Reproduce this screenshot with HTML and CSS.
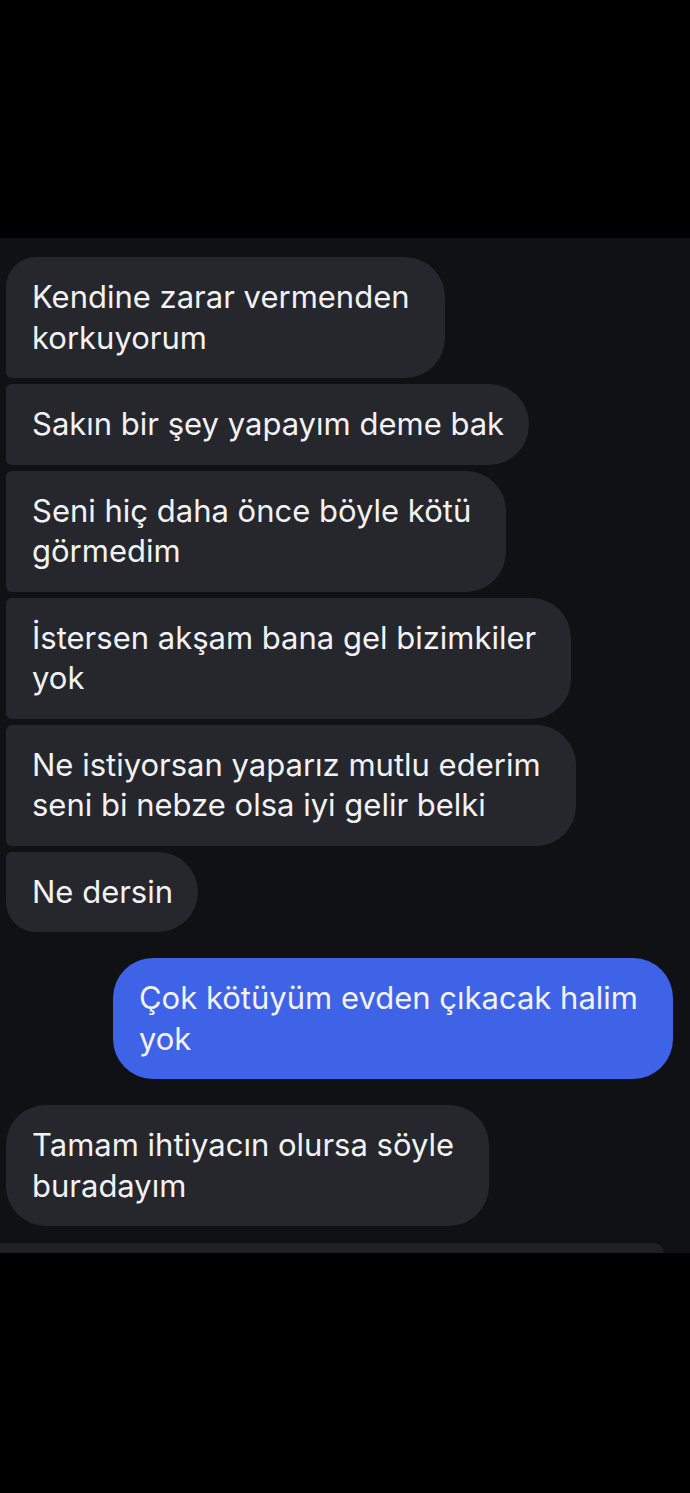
FILE: index.html
```html
<!DOCTYPE html>
<html lang="tr">
<head>
    <meta charset="UTF-8">
    <meta name="viewport" content="width=device-width, initial-scale=1.0">
    <title>Sohbet</title>
    <link rel="stylesheet" href="styles.css">
</head>
<body>

    <div class="top-bar"></div>

    <!-- Mesajlar -->
    <div class="chat">
        <div class="msg in first multi">Kendine zarar vermenden<br>korkuyorum</div>
        <div class="msg in">Sakın bir şey yapayım deme bak</div>
        <div class="msg in multi">Seni hiç daha önce böyle kötü<br>görmedim</div>
        <div class="msg in multi">İstersen akşam bana gel bizimkiler<br>yok</div>
        <div class="msg in multi">Ne istiyorsan yaparız mutlu ederim<br>seni bi nebze olsa iyi gelir belki</div>
        <div class="msg in last">Ne dersin</div>

        <div class="msg out multi">Çok kötüyüm evden çıkacak halim<br>yok</div>

        <div class="msg in single multi">Tamam ihtiyacın olursa söyle<br>buradayım</div>

        <div class="msg peek"></div>
    </div>

</body>
</html>
```

FILE: styles.css
```css
body {
    font-family: Inter, "Noto Sans", sans-serif;
    background-color: #000;
    margin: 0;
    padding: 0;
}

.top-bar {
    height: 238px;
    background-color: #000;
}

.chat {
    height: 1015px;
    overflow: hidden;
    background-color: #0f1115;
    padding: 19px 6px 0 6px;
    box-sizing: border-box;
    display: flex;
    flex-direction: column;
    gap: 6px;
}

.msg {
    padding: 20px 25px 20px 26px;
    font-size: 31px;
    line-height: 40.5px;
    color: #f2f2f4;
    white-space: nowrap;
    box-sizing: border-box;
}

/* satır kırılan balonlarda sağda biraz boşluk kalıyor */
.msg.multi {
    padding-right: 35px;
}

.in {
    align-self: flex-start;
    background-color: #25272c;
    border-radius: 6px 40px 40px 6px;
}

.in.first {
    border-top-left-radius: 30px;
}

.in.last {
    border-bottom-left-radius: 30px;
}

.in.single {
    border-radius: 40px;
}

.out {
    align-self: flex-end;
    margin: 20px 11px 20px 0;
    background-color: #3f63e7;
    border-radius: 40px;
}

.peek {
    align-self: flex-start;
    margin: 11px 0 0 -6px;
    width: 664px;
    height: 60px;
    padding: 0;
    background-color: #1f2023;
    border-radius: 0 40px 0 0;
}
```
